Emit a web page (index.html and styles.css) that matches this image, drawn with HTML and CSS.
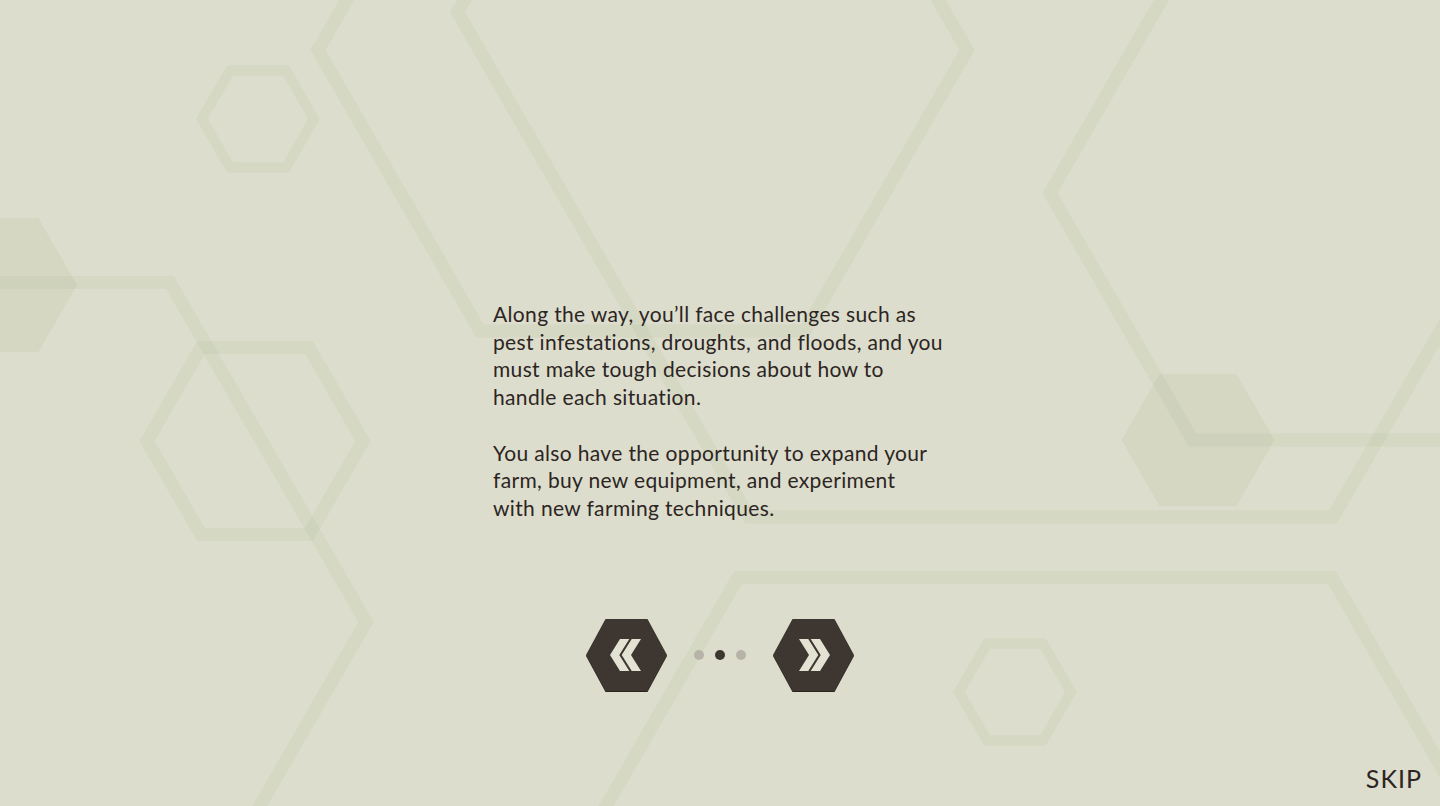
FILE: index.html
```html
<!DOCTYPE html>
<html lang="en">
<head>
<meta charset="utf-8">
<title>Story</title>
<link rel="stylesheet" href="styles.css">
</head>
<body>
<div class="screen">
  <svg class="backdrop" width="1440" height="806" viewBox="0 0 1440 806" aria-hidden="true">
    <g class="hex-line">
      <polygon class="thin" points="202,119 230,70.5 286,70.5 314,119 286,167.5 230,167.5"/>
      <polygon points="318,50 480,-231 805,-231 967,50 805,331 480,331"/>
      <polygon points="457.5,12 749,-493 1333,-493 1624.5,12 1333,517 749,517"/>
      <polygon points="1050,193 1192.5,-54 1477.5,-54 1620,193 1477.5,440 1192.5,440"/>
      <polygon points="-418,622 -222,282.5 170,282.5 366,622 170,961.5 -222,961.5"/>
      <polygon points="147,441 201,347.5 309,347.5 363,441 309,534.5 201,534.5"/>
      <polygon class="thin" points="959,692 987,643.5 1043,643.5 1071,692 1043,740.5 987,740.5"/>
      <polygon points="441,1092 738,577.6 1332,577.6 1629,1092 1332,1606 738,1606"/>
    </g>
    <g class="hex-fill">
      <polygon points="-77,285 -38.5,218.3 38.5,218.3 77,285 38.5,351.7 -38.5,351.7"/>
      <polygon points="1121.5,440 1159.75,373.7 1236.25,373.7 1274.5,440 1236.25,506.3 1159.75,506.3"/>
    </g>
  </svg>

  <main class="story">
    <div class="copy">
      <p>Along the way, you’ll face challenges such as<br>pest infestations, droughts, and floods, and you<br>must make tough decisions about how to<br>handle each situation.</p>
      <p>You also have the opportunity to expand your<br>farm, buy new equipment, and experiment<br>with new farming techniques.</p>
    </div>

    <nav class="pager" aria-label="Slides">
      <button class="hex-btn" type="button" aria-label="Previous">
        <svg width="81" height="72" viewBox="0 0 81 72">
          <polygon class="hex-shape" points="0,36 19.5,0 61.5,0 81,36 61.5,72 19.5,72"/>
          <polygon class="chev" points="24,36 34,20 43.3,20 33.3,36 43.3,52 34,52"/>
          <polygon class="chev" points="35.7,36 45.7,20 55,20 45,36 55,52 45.7,52"/>
        </svg>
      </button>
      <div class="dots">
        <span class="dot"></span>
        <span class="dot active"></span>
        <span class="dot"></span>
      </div>
      <button class="hex-btn" type="button" aria-label="Next">
        <svg width="81" height="72" viewBox="0 0 81 72">
          <polygon class="hex-shape" points="0,36 19.5,0 61.5,0 81,36 61.5,72 19.5,72"/>
          <polygon class="chev" points="57,36 47,20 37.7,20 47.7,36 37.7,52 47,52"/>
          <polygon class="chev" points="45.3,36 35.3,20 26,20 36,36 26,52 35.3,52"/>
        </svg>
      </button>
    </nav>
  </main>

  <footer class="bar">
    <button class="skip" type="button">SKIP</button>
  </footer>
</div>
</body>
</html>
```

FILE: styles.css
```css
html, body {
  margin: 0;
  padding: 0;
  background: #dcddcc;
}

.screen {
  position: relative;
  width: 1440px;
  height: 806px;
  overflow: hidden;
  display: flex;
  flex-direction: column;
  background: #dcddcc;
  font-family: Lato, "Noto Sans", sans-serif;
  color: #2c2523;
}

.backdrop {
  position: absolute;
  left: 0;
  top: 0;
  z-index: 0;
}

.hex-line polygon {
  fill: none;
  stroke: rgba(140, 160, 110, 0.085);
  stroke-width: 13;
  stroke-linejoin: miter;
}

.hex-line polygon.thin {
  stroke-width: 10;
}

.hex-fill polygon {
  fill: rgba(140, 160, 110, 0.09);
}

.story {
  position: relative;
  z-index: 1;
  flex: 1;
  display: flex;
  flex-direction: column;
  align-items: center;
  padding-top: 300px;
}

.copy {
  width: 454px;
  font-size: 21px;
  line-height: 27.7px;
  letter-spacing: 0.35px;
}

.copy p {
  margin: 0 0 27.7px;
}

.copy p:last-child {
  margin-bottom: 0;
}

.pager {
  display: flex;
  align-items: center;
  gap: 27px;
  margin-top: 97px;
}

.hex-btn {
  display: block;
  padding: 0;
  margin: 0;
  border: 0;
  background: none;
  width: 81px;
  height: 72px;
  cursor: pointer;
}

.hex-btn svg {
  display: block;
  filter: drop-shadow(0 1px 0 #2a2320);
}

.hex-shape {
  fill: #3e3631;
}

.chev {
  fill: #e4e2d2;
}

.dots {
  display: flex;
  gap: 11px;
}

.dot {
  width: 10px;
  height: 10px;
  border-radius: 50%;
  background: #b8b3a8;
}

.dot.active {
  background: #3e3631;
}

.bar {
  position: relative;
  z-index: 1;
  display: flex;
  justify-content: flex-end;
  padding: 0 18px 15px;
}

.skip {
  padding: 0;
  margin: 0;
  border: 0;
  background: none;
  font-family: Lato, "Noto Sans", sans-serif;
  font-size: 25px;
  line-height: 25px;
  letter-spacing: 1px;
  color: #2c2523;
  cursor: pointer;
}
```
